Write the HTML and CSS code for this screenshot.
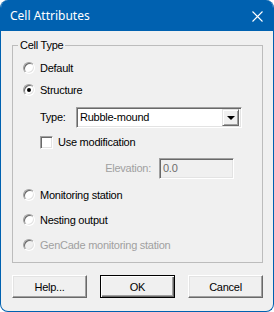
FILE: index.html
```html
<!DOCTYPE html>
<html lang="en">
<head>
    <meta charset="UTF-8" />
    <title>Cell Attributes</title>
    <link rel="stylesheet" href="styles.css">
</head>
<body>
    <div class="dialog">
        <div class="titlebar">
            <span class="title">Cell Attributes</span>
            <svg class="close" width="11" height="11" viewBox="0 0 11 11">
                <path d="M0.5 0.5 L10.5 10.5 M10.5 0.5 L0.5 10.5" stroke="#fff" stroke-width="1.1" fill="none"/>
            </svg>
        </div>
        <div class="content">
            <fieldset class="group">
                <legend>Cell Type</legend>
                <div class="row first"><span class="radio"></span><span class="lbl">Default</span></div>
                <div class="row tight"><span class="radio checked"></span><span class="lbl">Structure</span></div>
                <div class="row type-row">
                    <span class="lbl-type">Type:</span>
                    <div class="select">
                        <span class="select-text">Rubble-mound</span>
                        <span class="drop"><span class="arrow"></span></span>
                    </div>
                </div>
                <div class="row check-row"><span class="check"></span><span class="lbl">Use modification</span></div>
                <div class="row elev-row">
                    <span class="lbl-elev">Elevation:</span>
                    <div class="field disabled">0.0</div>
                </div>
                <div class="row gap6"><span class="radio"></span><span class="lbl">Monitoring station</span></div>
                <div class="row gap5"><span class="radio"></span><span class="lbl">Nesting output</span></div>
                <div class="row gap5"><span class="radio off"></span><span class="lbl grey">GenCade monitoring station</span></div>
            </fieldset>
            <div class="buttons">
                <button class="btn">Help...</button>
                <button class="btn default">OK</button>
                <button class="btn">Cancel</button>
            </div>
        </div>
    </div>
</body>
</html>
```

FILE: styles.css
```css
body {
    margin: 0; padding: 0;
    background: #fff;
    font-family: 'Liberation Sans', Arial, sans-serif;
    font-size: 11px; line-height: 13px; color: #000;
    letter-spacing: -0.25px;
}
.dialog {
    width: 274px; height: 312px;
    box-sizing: border-box;
    border: 1px solid #0061b0;
    border-top: none;
    border-radius: 8px;
    background: #f0f0f0;
    overflow: hidden;
}
.titlebar {
    height: 31px;
    background: #0061b0;
    display: flex; align-items: center; justify-content: space-between;
    padding: 0 10px 0 9px;
}
.title {
    font-family: 'Noto Sans', sans-serif;
    font-size: 12px; color: #fff;
    letter-spacing: 0;
    padding-bottom: 1px;
}
.close { margin-top: 1px; }

.content { padding: 8px 10px 0 11px; }

.group {
    margin: 0; padding: 0 0 7px 10px;
    border: 1px solid #bcbcbc;
    min-width: 0;
}
.group legend {
    padding: 0 2px; margin-left: -5px;
    color: #000;
}
.row {
    height: 20px;
    display: flex; align-items: center;
    margin-top: 4px;
}
.row.first { margin-top: 6px; }
.row.tight { margin-top: 2px; }
.row.gap6 { margin-top: 6px; }
.row.gap5 { margin-top: 5px; }

.radio {
    width: 12px; height: 12px;
    box-sizing: border-box;
    border-radius: 50%;
    border: 1px solid;
    border-color: #a0a0a0 #fff #fff #a0a0a0;
    box-shadow: inset 1px 1px #696969, inset -1px -1px #e3e3e3;
    background: #fff;
    display: flex; align-items: center; justify-content: center;
    flex-shrink: 0;
}
.radio.checked::after {
    content: '';
    width: 4px; height: 4px; border-radius: 50%;
    background: #000;
}
.radio.off { background: #f0f0f0; }
.lbl { margin-left: 5px; }
.lbl.grey { color: #a0a0a0; }

.type-row { margin-top: 7px; height: 21px; }
.lbl-type { width: 36px; margin-left: 17px; }
.select {
    width: 166px; height: 21px;
    box-sizing: border-box;
    border: 1px solid;
    border-color: #a0a0a0 #fff #fff #a0a0a0;
    box-shadow: inset 1px 1px #696969, inset -1px -1px #e3e3e3;
    background: #fff;
    display: flex; align-items: center; justify-content: space-between;
    padding: 2px;
}
.select-text { padding-left: 1px; }
.drop {
    width: 17px; height: 17px;
    box-sizing: border-box;
    background: #f0f0f0;
    border: 1px solid;
    border-color: #e3e3e3 #696969 #696969 #e3e3e3;
    box-shadow: inset 1px 1px #fff, inset -1px -1px #a0a0a0;
    display: flex; align-items: center; justify-content: center;
}
.arrow {
    width: 0; height: 0;
    border-left: 4px solid transparent;
    border-right: 4px solid transparent;
    border-top: 4px solid #000;
    margin-top: 1px;
}

.check {
    width: 13px; height: 13px;
    box-sizing: border-box;
    margin-left: 17px;
    border: 1px solid;
    border-color: #a0a0a0 #fff #fff #a0a0a0;
    box-shadow: inset 1px 1px #696969, inset -1px -1px #e3e3e3;
    background: #fff;
}

.elev-row { margin-top: 6px; height: 21px; }
.lbl-elev { width: 128px; text-align: right; color: #a0a0a0; }
.field {
    width: 75px; height: 21px;
    box-sizing: border-box;
    margin-left: 8px;
    border: 1px solid;
    border-color: #a0a0a0 #fff #fff #a0a0a0;
    box-shadow: inset 1px 1px #696969, inset -1px -1px #e3e3e3;
    padding: 3px 3px;
    background: #f0f0f0;
    color: #6d6d6d;
}

.buttons {
    display: flex; justify-content: space-between;
    margin-top: 12px;
}
.btn {
    width: 75px; height: 23px;
    font-family: 'Liberation Sans', Arial, sans-serif;
    font-size: 11px; color: #000;
    letter-spacing: -0.25px;
    background: #f0f0f0;
    border: 1px solid;
    border-color: #fff #696969 #696969 #fff;
    box-shadow: inset -1px -1px #a0a0a0, inset 1px 1px #e3e3e3;
    padding: 0;
}
.btn.default {
    border: 1px solid #000;
    box-shadow: inset 1px 1px #fff, inset -1px -1px #696969, inset -2px -2px #a0a0a0;
}
```
